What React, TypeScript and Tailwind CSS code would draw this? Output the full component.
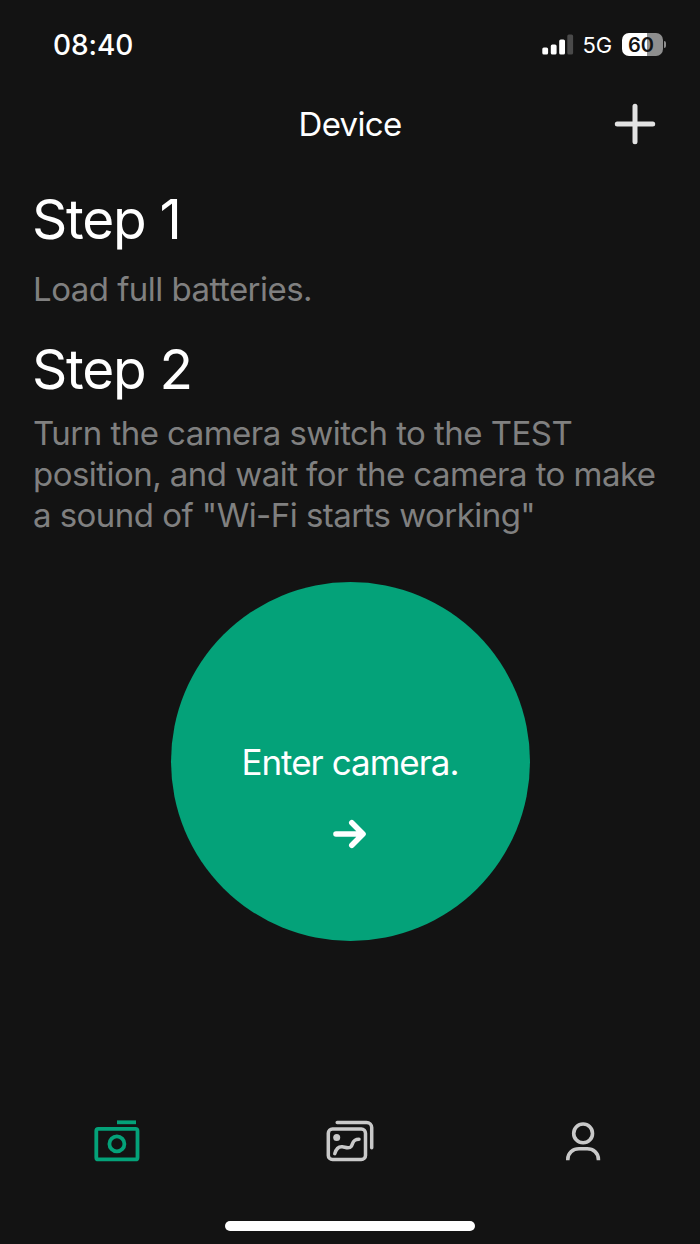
import { useState } from "react";

type Tab = "camera" | "gallery" | "profile";

type IconProps = {
  className?: string;
};

function SignalIcon() {
  return (
    <svg width="32" height="22" viewBox="0 0 32 22" fill="white" aria-hidden="true">
      <rect x="0.3" y="14.5" width="5.8" height="7" rx="1.6" />
      <rect x="8.8" y="11.5" width="5.8" height="10" rx="1.6" />
      <rect x="17.2" y="6.5" width="5.8" height="15" rx="1.6" />
      <rect x="25.3" y="1.5" width="5.8" height="20" rx="1.6" fill="#4a4a4a" />
    </svg>
  );
}

function PlusIcon() {
  return (
    <svg width="42" height="42" viewBox="0 0 42 42" fill="none" aria-hidden="true">
      <path
        d="M21 3.3v35.4M3.3 21h35.4"
        stroke="#e2e2e2"
        strokeWidth="5"
        strokeLinecap="round"
      />
    </svg>
  );
}

function ArrowIcon() {
  return (
    <svg width="34" height="30" viewBox="0 0 34 30" fill="none" aria-hidden="true">
      <path
        d="M3 15h26M18.8 3.8L30 15L18.8 26.2"
        stroke="white"
        strokeWidth="5.6"
        strokeLinecap="round"
        strokeLinejoin="round"
      />
    </svg>
  );
}

function CameraIcon({ className }: IconProps) {
  return (
    <svg
      width="48"
      height="44"
      viewBox="0 0 48 44"
      fill="none"
      stroke="currentColor"
      strokeWidth="3.8"
      className={className}
      aria-hidden="true"
    >
      <rect x="3.3" y="8.8" width="41.2" height="30.6" rx="2" />
      <circle cx="23.9" cy="23.9" r="7.5" />
      <path d="M24 2.3h19" />
    </svg>
  );
}

function GalleryIcon({ className }: IconProps) {
  return (
    <svg
      width="48"
      height="44"
      viewBox="0 0 48 44"
      fill="none"
      stroke="currentColor"
      strokeWidth="3.5"
      strokeLinecap="round"
      strokeLinejoin="round"
      className={className}
      aria-hidden="true"
    >
      <rect x="2.3" y="9" width="37.2" height="30.6" rx="4.2" />
      <path d="M11.2 2.4h29.3a5.2 5.2 0 0 1 5.2 5.2v20.2" />
      <circle cx="10.7" cy="17.6" r="3.5" fill="currentColor" stroke="none" />
      <path d="M8.8 33.6C10.2 28.6 13 26.4 16.4 26.8C19.5 27.2 23 29.2 25.2 26.5C27.2 24 26 19.2 33 19.2" />
    </svg>
  );
}

function ProfileIcon({ className }: IconProps) {
  return (
    <svg
      width="36"
      height="40"
      viewBox="0 0 36 40"
      fill="none"
      stroke="currentColor"
      strokeWidth="3.6"
      className={className}
      aria-hidden="true"
    >
      <circle cx="18.1" cy="11.4" r="9.4" />
      <path d="M2.8 38.2v-0.8C2.8 30.9 8 26.8 14 26.8h8.2C28.2 26.8 33.4 30.9 33.4 37.4v0.8" />
    </svg>
  );
}

const tabs = [
  { id: "camera" as Tab, label: "Device", Icon: CameraIcon },
  { id: "gallery" as Tab, label: "Gallery", Icon: GalleryIcon },
  { id: "profile" as Tab, label: "Profile", Icon: ProfileIcon },
];

function StatusBar() {
  return (
    <div className="flex h-[88px] items-center justify-between pr-[34px] pl-[53px]">
      <span className="pt-[2px] text-[28px] font-medium tracking-[-0.1px]">08:40</span>
      <div className="flex items-center">
        <SignalIcon />
        <span className="ml-[9px] pt-[2px] text-[22px] tracking-[-0.2px]">5G</span>
        <div className="ml-[10px] flex h-[23px] w-[41px] items-center justify-center rounded-[7px] bg-linear-to-r from-white from-60% to-[#8e8e8e] to-60% pt-[2px] pr-[3px] text-[20px] font-semibold text-[#131313]">
          60
        </div>
        <div className="ml-[1px] h-[7px] w-[2px] rounded-r-full bg-[#8e8e8e]" />
      </div>
    </div>
  );
}

function App() {
  const [activeTab, setActiveTab] = useState<Tab>("camera");

  return (
    <div className="flex h-[1244px] w-[700px] flex-col overflow-hidden bg-[#131313] font-['Inter',sans-serif] text-white">
      <StatusBar />

      <header className="grid h-[72px] grid-cols-[1fr_auto_1fr] items-center px-[44px]">
        <h1 className="col-start-2 pt-[2px] text-[33px] tracking-[-0.7px]">Device</h1>
        <button type="button" aria-label="Add device" className="justify-self-end">
          <PlusIcon />
        </button>
      </header>

      <main className="flex flex-1 flex-col px-[33px] pt-[29px]">
        <h2 className="-ml-px text-[55px] leading-[60px] tracking-[-1.3px]">Step 1</h2>
        <p className="mt-[20px] text-[33px] leading-[41px] tracking-[-0.53px] text-[#808080]">
          Load full batteries.
        </p>
        <h2 className="mt-[29px] -ml-px text-[55px] leading-[60px] tracking-[-1.3px]">Step 2</h2>
        <p className="mt-[14px] text-[33px] leading-[41px] tracking-[-0.54px] whitespace-nowrap text-[#808080]">
          Turn the camera switch to the TEST
          <br />
          position, and wait for the camera to make
          <br />
          a sound of "Wi-Fi starts working"
        </p>

        <button
          type="button"
          className="mt-[46px] flex size-[359px] flex-col items-center self-center rounded-full bg-[#04a279] pt-[160px]"
        >
          <span className="text-[35px] leading-[40px] tracking-[-1px]">Enter camera.</span>
          <span className="mt-[37px]">
            <ArrowIcon />
          </span>
        </button>
      </main>

      <nav className="grid h-[84px] grid-cols-3 items-center">
        {tabs.map(({ id, label, Icon }) => (
          <button
            key={id}
            type="button"
            aria-label={label}
            onClick={() => setActiveTab(id)}
            className="flex justify-center"
          >
            <Icon className={activeTab === id ? "text-[#04a279]" : "text-[#c9c9c9]"} />
          </button>
        ))}
      </nav>

      <div className="flex h-[60px] justify-center pt-[37px]">
        <div className="h-[10px] w-[250px] rounded-full bg-white" />
      </div>
    </div>
  );
}

export default App;
